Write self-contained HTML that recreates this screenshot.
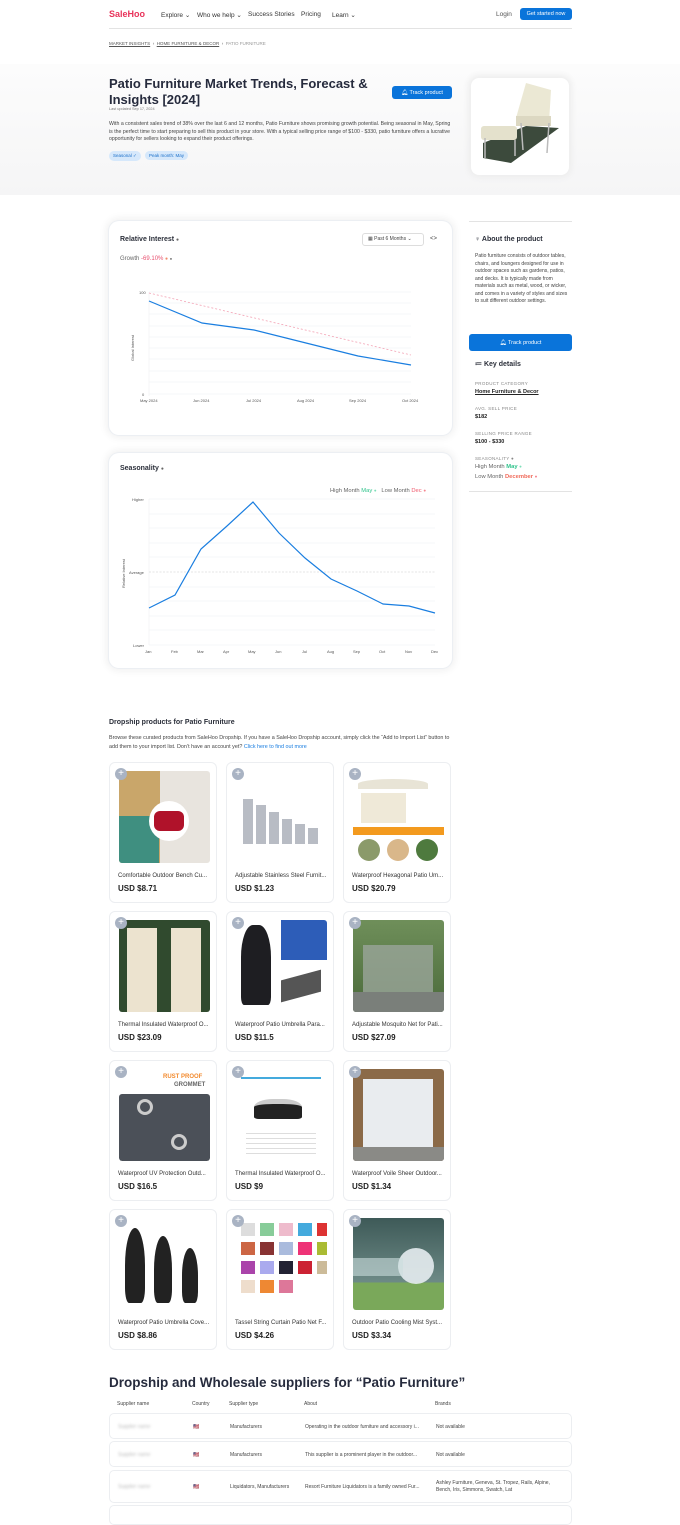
<!DOCTYPE html>
<html><head><meta charset="utf-8">
<style>
*{box-sizing:border-box;margin:0;padding:0}
body{width:680px;height:1512px;overflow:hidden;background:#fff;font-family:"Liberation Sans",sans-serif;color:#2b2f3a;position:relative}
.a{position:absolute}
.nav{font-size:6.5px;color:#333}
.btn{background:#0a74da;color:#fff;border-radius:3px;font-size:5.5px;display:flex;align-items:center;justify-content:center}
.card{position:absolute;background:#fff;border-radius:10px;box-shadow:0 0 0 1px #eceff3,0 0 8px 3px #f1f1f1}
.pc{position:absolute;width:108px;height:141px;border:1px solid #eceef1;border-radius:6px;background:#fff}
.pc .img{position:absolute;left:9px;top:8px;width:91px;height:92px;border-radius:3px;overflow:hidden}
.pc .t{position:absolute;left:8px;top:110px;font-size:6px;color:#333;white-space:nowrap}
.pc .p{position:absolute;left:8px;top:121px;font-size:8px;color:#222;font-weight:bold}
.pc .plus{position:absolute;left:5px;top:5px;width:12px;height:12px;border-radius:50%;background:#a9b3c3;color:#fff;font-size:10px;line-height:11px;text-align:center;z-index:2}
.sm{font-size:4.5px;color:#888;letter-spacing:.3px}
.row{position:absolute;left:109px;width:463px;border:1px solid #eceef1;border-radius:5px;font-size:5px;color:#444}
.row span{position:absolute}
</style></head><body>
<!-- header -->
<div class="a" style="left:109px;top:9px;font-size:9px;font-weight:bold;color:#e8335a">SaleHoo</div>
<div class="a nav" style="left:161px;top:11px">Explore ⌄</div>
<div class="a nav" style="left:197px;top:11px">Who we help ⌄</div>
<div class="a nav" style="left:248px;top:11px">Success Stories</div>
<div class="a nav" style="left:301px;top:11px">Pricing</div>
<div class="a nav" style="left:332px;top:11px">Learn ⌄</div>
<div class="a nav" style="left:496px;top:11px;color:#555">Login</div>
<div class="a btn" style="left:520px;top:8px;width:52px;height:12px">Get started now</div>
<div class="a" style="left:109px;top:28px;width:463px;height:1px;background:#e3e3e3"></div>
<div class="a" style="left:109px;top:41px;font-size:4.5px;color:#555"><u>MARKET INSIGHTS</u> &nbsp;›&nbsp; <u>HOME FURNITURE &amp; DECOR</u> &nbsp;›&nbsp; <span style="color:#999">PATIO FURNITURE</span></div>
<!-- hero -->
<div class="a" style="left:0;top:64px;width:680px;height:131px;background:linear-gradient(#fcfcfc,#f5f5f6)"></div>
<div class="a" style="left:109px;top:76px;width:280px;font-size:13px;font-weight:bold;line-height:16px;color:#262b3d">Patio Furniture Market Trends, Forecast &amp; Insights [2024]</div>
<div class="a" style="left:109px;top:107px;font-size:3.8px;color:#777">Last updated Sep 17, 2024</div>
<div class="a btn" style="left:392px;top:86px;width:60px;height:13px">🔔︎ Track product</div>
<div class="a" style="left:109px;top:121px;width:345px;font-size:5.2px;line-height:7.5px;color:#444">With a consistent sales trend of 38% over the last 6 and 12 months, Patio Furniture shows promising growth potential. Being seasonal in May, Spring is the perfect time to start preparing to sell this product in your store. With a typical selling price range of $100 - $330, patio furniture offers a lucrative opportunity for sellers looking to expand their product offerings.</div>
<div class="a" style="left:109px;top:151px;background:#d6e8fb;color:#1a6fc9;font-size:4.5px;padding:2px 4px;border-radius:5px">Seasonal ✓</div>
<div class="a" style="left:145px;top:151px;background:#d6e8fb;color:#1a6fc9;font-size:4.5px;padding:2px 4px;border-radius:5px">Peak month: May</div>
<div class="a" style="left:471px;top:78px;width:98px;height:97px;background:#fff;border-radius:8px;box-shadow:0 0 6px 3px #eee;overflow:hidden">
<svg width="98" height="97" viewBox="0 0 98 97"><polygon points="12,65 55,48 88,50 40,85 12,80" fill="#3c4a3c"/><rect x="10" y="48" width="36" height="14" rx="3" fill="#e4e1cc"/><path d="M45,40 L55,5 L80,12 L78,45 Z" fill="#ebe8d4"/><rect x="45" y="38" width="35" height="10" fill="#dcd8c2"/><path d="M14,60 L14,80 M44,62 L44,78 M50,45 L52,72 M78,45 L76,75" stroke="#bbb" stroke-width="1.5"/></svg></div>
<!-- chart 1 -->
<div class="card" style="left:109px;top:221px;width:343px;height:214px"></div>
<div class="a" style="left:120px;top:236px;font-size:7px;font-weight:bold;color:#2b2f3a">Relative Interest <span style="font-size:5px;color:#666">●</span></div>
<div class="a" style="left:362px;top:233px;width:62px;height:13px;border:1px solid #ddd;border-radius:3px;font-size:5px;color:#444;line-height:11px;padding-left:5px">▦ Past 6 Months ⌄</div>
<div class="a" style="left:430px;top:236px;font-size:6px;color:#444">&lt;&gt;</div>
<div class="a" style="left:120px;top:256px;font-size:6px;color:#666">Growth <span style="color:#e8506f">-69.10%</span> <span style="color:#f08a6a;font-size:5px">●</span> <span style="font-size:4px">●</span></div>
<svg class="a" style="left:109px;top:221px" width="343" height="214">
<g stroke="#eef0f2" stroke-width="0.6">
<line x1="40" y1="71" x2="302" y2="71"/><line x1="40" y1="82" x2="302" y2="82"/><line x1="40" y1="93" x2="302" y2="93"/><line x1="40" y1="105" x2="302" y2="105"/><line x1="40" y1="116" x2="302" y2="116"/><line x1="40" y1="127" x2="302" y2="127"/><line x1="40" y1="138" x2="302" y2="138"/><line x1="40" y1="150" x2="302" y2="150"/><line x1="40" y1="161" x2="302" y2="161"/><line x1="40" y1="173" x2="302" y2="173"/><line x1="40" y1="71" x2="40" y2="175"/></g>
<line x1="40" y1="72" x2="302" y2="134" stroke="#f3a3b5" stroke-width="0.8" stroke-dasharray="2,2"/>
<polyline points="40,80 93,102 145,109 197,122 249,135 302,144" fill="none" stroke="#1a7ee0" stroke-width="1.2"/>
<g font-size="4" fill="#555" font-family="Liberation Sans"><text x="30" y="73">100</text><text x="33" y="175">0</text>
<text x="31" y="181">May 2024</text><text x="84" y="181">Jun 2024</text><text x="137" y="181">Jul 2024</text><text x="188" y="181">Aug 2024</text><text x="240" y="181">Sep 2024</text><text x="293" y="181">Oct 2024</text>
<text transform="translate(25,140) rotate(-90)">Global Interest</text></g></svg>
<!-- chart 2 -->
<div class="card" style="left:109px;top:453px;width:343px;height:215px"></div>
<div class="a" style="left:120px;top:465px;font-size:7px;font-weight:bold;color:#2b2f3a">Seasonality <span style="font-size:5px;color:#666">●</span></div>
<div class="a" style="left:330px;top:488px;font-size:5.8px;color:#666">High Month <span style="color:#2cc28a">May</span> <span style="color:#7ddfb9;font-size:4.5px">●</span> &nbsp; Low Month <span style="color:#f05a6e">Dec</span> <span style="color:#f5858f;font-size:4.5px">●</span></div>
<svg class="a" style="left:109px;top:453px" width="343" height="215">
<g stroke="#eef0f2" stroke-width="0.6">
<line x1="40" y1="46" x2="326" y2="46"/><line x1="40" y1="61" x2="326" y2="61"/><line x1="40" y1="75" x2="326" y2="75"/><line x1="40" y1="90" x2="326" y2="90"/><line x1="40" y1="104" x2="326" y2="104"/><line x1="40" y1="134" x2="326" y2="134"/><line x1="40" y1="148" x2="326" y2="148"/><line x1="40" y1="163" x2="326" y2="163"/><line x1="40" y1="177" x2="326" y2="177"/><line x1="40" y1="192" x2="326" y2="192"/><line x1="40" y1="46" x2="40" y2="192"/></g>
<line x1="40" y1="119" x2="326" y2="119" stroke="#ccc" stroke-width="0.6" stroke-dasharray="2,1.5"/>
<polyline points="40,155 66,142 92,96 118,73 144,49 170,80 196,105 222,126 248,138 274,151 300,153 326,160" fill="none" stroke="#1a7ee0" stroke-width="1.2"/>
<g font-size="4" fill="#555" font-family="Liberation Sans"><text x="23" y="48">Higher</text><text x="20" y="121">Average</text><text x="24" y="194">Lower</text>
<text transform="translate(16,135) rotate(-90)">Relative Interest</text>
<text x="36" y="200">Jan</text><text x="62" y="200">Feb</text><text x="88" y="200">Mar</text><text x="114" y="200">Apr</text><text x="139" y="200">May</text><text x="166" y="200">Jun</text><text x="193" y="200">Jul</text><text x="218" y="200">Aug</text><text x="244" y="200">Sep</text><text x="270" y="200">Oct</text><text x="296" y="200">Nov</text><text x="322" y="200">Dec</text></g></svg>
<!-- sidebar -->
<div class="a" style="left:469px;top:221px;width:103px;height:1px;background:#e3e3e3"></div>
<div class="a" style="left:475px;top:236px;font-size:7px;font-weight:bold;color:#2b2f3a">♀︎ About the product</div>
<div class="a" style="left:475px;top:253px;width:95px;font-size:5px;line-height:7.5px;color:#444">Patio furniture consists of outdoor tables, chairs, and loungers designed for use in outdoor spaces such as gardens, patios, and decks. It is typically made from materials such as metal, wood, or wicker, and comes in a variety of styles and sizes to suit different outdoor settings.</div>
<div class="a btn" style="left:469px;top:334px;width:103px;height:17px">🔔︎ Track product</div>
<div class="a" style="left:475px;top:360px;font-size:7px;font-weight:bold;color:#2b2f3a">≔ Key details</div>
<div class="a sm" style="left:475px;top:381px">PRODUCT CATEGORY</div>
<div class="a" style="left:475px;top:389px;font-size:5.5px;font-weight:bold;color:#222"><u>Home Furniture &amp; Decor</u></div>
<div class="a sm" style="left:475px;top:406px">AVG. SELL PRICE</div>
<div class="a" style="left:475px;top:414px;font-size:5.5px;font-weight:bold;color:#222">$182</div>
<div class="a sm" style="left:475px;top:431px">SELLING PRICE RANGE</div>
<div class="a" style="left:475px;top:439px;font-size:5.5px;font-weight:bold;color:#222">$100 - $330</div>
<div class="a sm" style="left:475px;top:456px">SEASONALITY ●</div>
<div class="a" style="left:475px;top:464px;font-size:5.8px;color:#666">High Month <b style="color:#2cc28a">May</b> <span style="color:#7ddfb9;font-size:4.5px">●</span></div>
<div class="a" style="left:475px;top:474px;font-size:5.8px;color:#666">Low Month <b style="color:#f06a5a">December</b> <span style="color:#f5858f;font-size:4.5px">●</span></div>
<div class="a" style="left:469px;top:491px;width:103px;height:1px;background:#e3e3e3"></div>
<!-- dropship -->
<div class="a" style="left:109px;top:719px;font-size:7px;font-weight:bold;color:#2b2f3a">Dropship products for Patio Furniture</div>
<div class="a" style="left:109px;top:734px;width:345px;font-size:5.4px;line-height:8.5px;color:#444">Browse these curated products from SaleHoo Dropship. If you have a SaleHoo Dropship account, simply click the “Add to Import List” button to add them to your import list. Don’t have an account yet? <span style="color:#1a7ee0">Click here to find out more</span></div>

<div class="pc" style="left:109px;top:762px"><div class="plus">+</div><div class="img" style="background:linear-gradient(90deg,#c9a66a 0 45%,#e8e4de 45%);"><div style="position:absolute;left:0;top:45px;width:40px;height:47px;background:#3f8f80"></div><div style="position:absolute;left:30px;top:30px;width:40px;height:40px;border-radius:50%;background:#fff"></div><div style="position:absolute;left:35px;top:40px;width:30px;height:20px;border-radius:6px;background:#b0122a"></div></div><div class="t">Comfortable Outdoor Bench Cu...</div><div class="p">USD $8.71</div></div>
<div class="pc" style="left:226px;top:762px"><div class="plus">+</div><div class="img" style="background:#fff"><svg width="91" height="92"><g fill="#b8bcc4"><rect x="7" y="28" width="10" height="45"/><rect x="20" y="34" width="10" height="39"/><rect x="33" y="41" width="10" height="32"/><rect x="46" y="48" width="10" height="25"/><rect x="59" y="53" width="10" height="20"/><rect x="72" y="57" width="10" height="16"/></g></svg></div><div class="t">Adjustable Stainless Steel Furnit...</div><div class="p">USD $1.23</div></div>
<div class="pc" style="left:343px;top:762px"><div class="plus">+</div><div class="img" style="background:#fff"><div style="position:absolute;left:5px;top:8px;width:70px;height:10px;border-radius:50% 50% 0 0;background:#e8e4d6"></div><div style="position:absolute;left:8px;top:22px;width:45px;height:30px;background:#efe9d8"></div><div style="position:absolute;left:0;top:56px;width:91px;height:8px;background:#f39a1e"></div><div style="position:absolute;left:5px;top:68px;width:22px;height:22px;border-radius:50%;background:#8b9a6a"></div><div style="position:absolute;left:34px;top:68px;width:22px;height:22px;border-radius:50%;background:#d9b78a"></div><div style="position:absolute;left:63px;top:68px;width:22px;height:22px;border-radius:50%;background:#4e7a3e"></div></div><div class="t">Waterproof Hexagonal Patio Um...</div><div class="p">USD $20.79</div></div>

<div class="pc" style="left:109px;top:911px"><div class="plus">+</div><div class="img" style="background:#304a2e"><div style="position:absolute;left:8px;top:8px;width:30px;height:84px;background:#ece3cf"></div><div style="position:absolute;left:52px;top:8px;width:30px;height:84px;background:#ece3cf"></div></div><div class="t">Thermal Insulated Waterproof O...</div><div class="p">USD $23.09</div></div>
<div class="pc" style="left:226px;top:911px"><div class="plus">+</div><div class="img" style="background:#fff"><div style="position:absolute;left:45px;top:0;width:46px;height:40px;background:#2d5db8"></div><div style="position:absolute;left:5px;top:5px;width:30px;height:80px;border-radius:40% 40% 10% 10%;background:#1e1e22"></div><div style="position:absolute;left:45px;top:55px;width:40px;height:22px;background:#555;transform:skewY(-15deg)"></div></div><div class="t">Waterproof Patio Umbrella Para...</div><div class="p">USD $11.5</div></div>
<div class="pc" style="left:343px;top:911px"><div class="plus">+</div><div class="img" style="background:linear-gradient(#6f8f5a,#4a6a3a)"><div style="position:absolute;left:10px;top:25px;width:70px;height:50px;background:#9aa59a;opacity:.8"></div><div style="position:absolute;left:0;top:72px;width:91px;height:20px;background:#7a7f7a"></div></div><div class="t">Adjustable Mosquito Net for Pati...</div><div class="p">USD $27.09</div></div>

<div class="pc" style="left:109px;top:1060px"><div class="plus">+</div><div class="img" style="background:#fff"><div style="position:absolute;left:44px;top:5px;font-size:6px;font-weight:bold;color:#f28a2e">RUST PROOF</div><div style="position:absolute;left:55px;top:13px;font-size:6px;font-weight:bold;color:#666">GROMMET</div><div style="position:absolute;left:0;top:25px;width:91px;height:67px;background:#4b5058;border-radius:3px"></div><div style="position:absolute;left:18px;top:30px;width:16px;height:16px;border-radius:50%;border:3px solid #ccc"></div><div style="position:absolute;left:52px;top:65px;width:16px;height:16px;border-radius:50%;border:3px solid #ccc"></div></div><div class="t">Waterproof UV Protection Outd...</div><div class="p">USD $16.5</div></div>
<div class="pc" style="left:226px;top:1060px"><div class="plus">+</div><div class="img" style="background:#fff"><div style="position:absolute;left:5px;top:8px;width:80px;height:2px;background:#4ad"></div><div style="position:absolute;left:18px;top:30px;width:48px;height:20px;border-radius:40% 40% 10% 10%;background:#222;border-top:5px solid #ccc"></div><div style="position:absolute;left:10px;top:60px;width:70px;height:25px;background:repeating-linear-gradient(#fff 0 4px,#ddd 4px 5px)"></div></div><div class="t">Thermal Insulated Waterproof O...</div><div class="p">USD $9</div></div>
<div class="pc" style="left:343px;top:1060px"><div class="plus">+</div><div class="img" style="background:#8b6a48"><div style="position:absolute;left:10px;top:10px;width:70px;height:70px;background:#e9ecef"></div><div style="position:absolute;left:0;top:78px;width:91px;height:14px;background:#8a8a86"></div></div><div class="t">Waterproof Voile Sheer Outdoor...</div><div class="p">USD $1.34</div></div>

<div class="pc" style="left:109px;top:1209px"><div class="plus">+</div><div class="img" style="background:#fff"><div style="position:absolute;left:6px;top:10px;width:20px;height:75px;border-radius:50% 50% 20% 20%;background:#222"></div><div style="position:absolute;left:35px;top:18px;width:18px;height:67px;border-radius:50% 50% 20% 20%;background:#222"></div><div style="position:absolute;left:63px;top:30px;width:16px;height:55px;border-radius:50% 50% 20% 20%;background:#222"></div></div><div class="t">Waterproof Patio Umbrella Cove...</div><div class="p">USD $8.86</div></div>
<div class="pc" style="left:226px;top:1209px"><div class="plus">+</div><div class="img" style="background:#fff"><svg width="91" height="92"><g><rect x="5" y="5" width="14" height="13" fill="#ddd"/><rect x="24" y="5" width="14" height="13" fill="#8c9"/><rect x="43" y="5" width="14" height="13" fill="#ebc"/><rect x="62" y="5" width="14" height="13" fill="#4ad"/><rect x="81" y="5" width="10" height="13" fill="#d33"/>
<rect x="5" y="24" width="14" height="13" fill="#c64"/><rect x="24" y="24" width="14" height="13" fill="#833"/><rect x="43" y="24" width="14" height="13" fill="#abd"/><rect x="62" y="24" width="14" height="13" fill="#e37"/><rect x="81" y="24" width="10" height="13" fill="#ab3"/>
<rect x="5" y="43" width="14" height="13" fill="#a4a"/><rect x="24" y="43" width="14" height="13" fill="#aae"/><rect x="43" y="43" width="14" height="13" fill="#223"/><rect x="62" y="43" width="14" height="13" fill="#c23"/><rect x="81" y="43" width="10" height="13" fill="#cb9"/>
<rect x="5" y="62" width="14" height="13" fill="#edc"/><rect x="24" y="62" width="14" height="13" fill="#e83"/><rect x="43" y="62" width="14" height="13" fill="#d79"/></g></svg></div><div class="t">Tassel String Curtain Patio Net F...</div><div class="p">USD $4.26</div></div>
<div class="pc" style="left:343px;top:1209px"><div class="plus">+</div><div class="img" style="background:linear-gradient(#3e5a58,#6d8a86 70%,#7aa85a 70%)"><div style="position:absolute;left:45px;top:30px;width:36px;height:36px;border-radius:50%;background:#e6ecef;opacity:.9"></div><div style="position:absolute;left:0;top:40px;width:50px;height:18px;background:#cdd;opacity:.6"></div></div><div class="t">Outdoor Patio Cooling Mist Syst...</div><div class="p">USD $3.34</div></div>

<!-- suppliers -->
<div class="a" style="left:109px;top:1375px;font-size:13.5px;font-weight:bold;color:#262b3d">Dropship and Wholesale suppliers for “Patio Furniture”</div>
<div class="a" style="left:117px;top:1401px;font-size:5px;color:#444;width:450px"><span class="a" style="left:0">Supplier name</span><span class="a" style="left:75px">Country</span><span class="a" style="left:112px">Supplier type</span><span class="a" style="left:187px">About</span><span class="a" style="left:318px">Brands</span></div>
<div class="row" style="top:1413px;height:26px"><span style="left:8px;top:10px;color:#bbb;filter:blur(1.2px)">Supplier name</span><span style="left:83px;top:10px">🇺🇸︎</span><span style="left:120px;top:10px">Manufacturers</span><span style="left:195px;top:10px">Operating in the outdoor furniture and accessory i...</span><span style="left:326px;top:10px">Not available</span></div>
<div class="row" style="top:1441px;height:26px"><span style="left:8px;top:10px;color:#bbb;filter:blur(1.2px)">Supplier name</span><span style="left:83px;top:10px">🇺🇸︎</span><span style="left:120px;top:10px">Manufacturers</span><span style="left:195px;top:10px">This supplier is a prominent player in the outdoor...</span><span style="left:326px;top:10px">Not available</span></div>
<div class="row" style="top:1470px;height:33px"><span style="left:8px;top:13px;color:#bbb;filter:blur(1.2px)">Supplier name</span><span style="left:83px;top:13px">🇺🇸︎</span><span style="left:120px;top:13px">Liquidators, Manufacturers</span><span style="left:195px;top:13px">Resort Furniture Liquidators is a family owned Fur...</span><span style="left:326px;top:9px;line-height:7px">Ashley Furniture, Geneva, St. Tropez, Rails, Alpine,<br>Bench, Iris, Simmons, Swatch, Lat</span></div>
<div class="row" style="top:1505px;height:20px"></div>
</body></html>
